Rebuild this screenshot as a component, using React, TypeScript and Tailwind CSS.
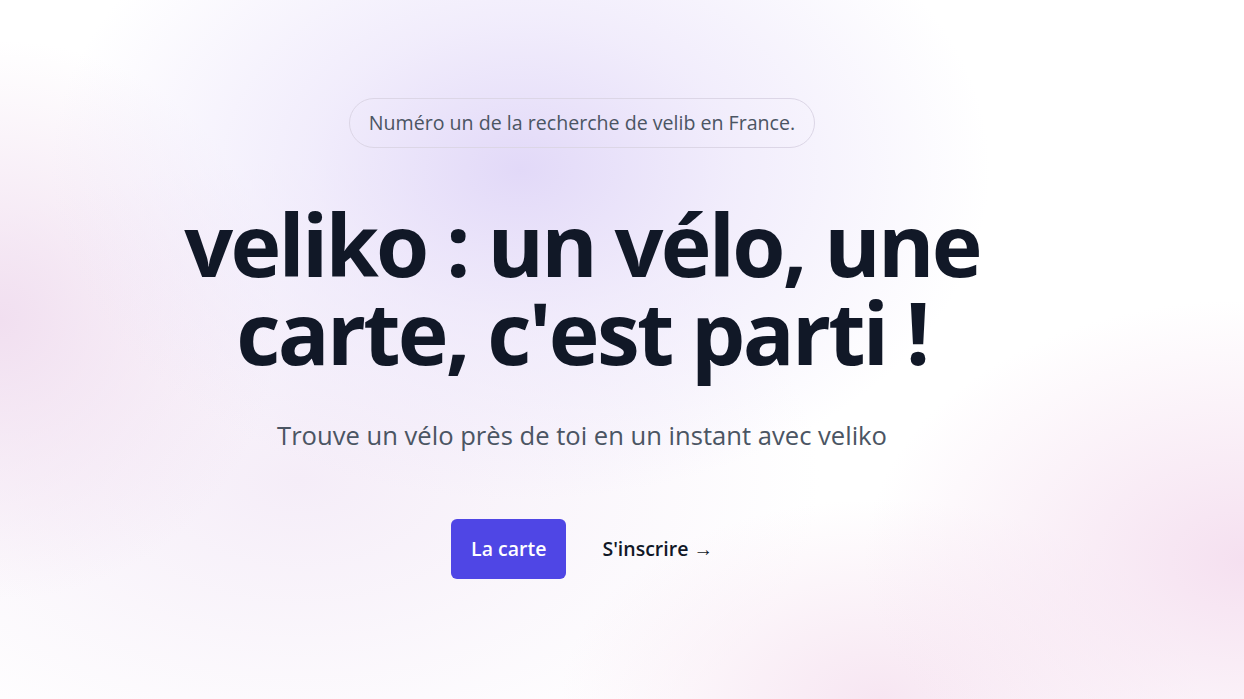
export default function App() {
  return (
    <main className="relative h-[699px] w-full overflow-hidden bg-white font-['Open_Sans',sans-serif]">
      <div className="h-full w-full bg-[radial-gradient(ellipse_470px_330px_at_520px_170px,#e2d9f8_0%,rgba(234,227,250,0.65)_45%,transparent_100%),radial-gradient(ellipse_280px_280px_at_0px_320px,#f1dff0_0%,transparent_100%),radial-gradient(ellipse_380px_260px_at_1244px_560px,#f5e0f0_0%,transparent_100%),radial-gradient(ellipse_320px_200px_at_880px_699px,#f7e6f2_0%,transparent_100%),radial-gradient(ellipse_520px_320px_at_300px_480px,#f5edf8_0%,transparent_100%)]">
        <div className="flex flex-col items-center pr-[80px] pt-[98px]">
          <div className="rounded-full border border-[#dcd6e6] px-[19px] py-[11px] text-[19.6px] leading-[26px] text-[#4b5563]">
            Numéro un de la recherche de velib en France.
          </div>

          <h1 className="mt-[52px] w-[860px] text-center text-[86px] font-bold leading-[88px] tracking-[-0.032em] text-[#111827]">
            veliko : un vélo, une carte, c'est parti !
          </h1>

          <p className="mt-[42px] text-[25.6px] leading-[36px] text-[#4b5563]">
            Trouve un vélo près de toi en un instant avec veliko
          </p>

          <div className="mt-[65px] flex items-center gap-[36px]">
            <button className="h-[60px] rounded-md bg-[#4f46e5] px-[20px] text-[19.5px] font-semibold text-white">
              La carte
            </button>
            <a href="#" className="text-[19.5px] font-semibold text-[#111827]">
              S'inscrire <span aria-hidden="true">→</span>
            </a>
          </div>
        </div>
      </div>
    </main>
  );
}
